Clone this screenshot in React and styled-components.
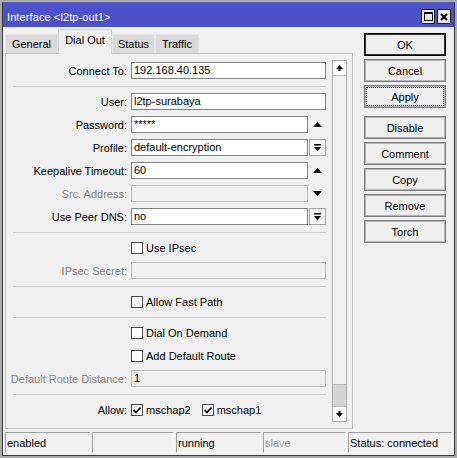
import styled, { createGlobalStyle } from 'styled-components';

const GlobalStyle = createGlobalStyle`
  html, body {
    margin: 0;
    padding: 0;
    background: #ababab;
  }
  body {
    font-family: "Liberation Sans", Arial, sans-serif;
    font-size: 11px;
    color: #000;
  }
  * {
    box-sizing: border-box;
  }
`;

const Frame = styled.div`
  width: 457px;
  height: 458px;
  padding: 2px 0 0 2px;
`;

const Window = styled.div`
  width: 453px;
  height: 454px;
  border: 1px solid #3a3a3a;
  border-top-color: #5a5ec0;
  background: #f0f0f0;
  display: flex;
  flex-direction: column;
`;

const TitleBar = styled.div`
  height: 24px;
  background: #4c50c9;
  color: #fff;
  display: flex;
  align-items: center;
  padding: 4px 3px 0 4px;
`;

const Title = styled.div`
  flex: 1;
  font-size: 11px;
  letter-spacing: 0.1px;
`;

const TitleButtons = styled.div`
  display: flex;
  gap: 2px;
  align-self: flex-end;
  margin-bottom: 3px;
`;

const TitleButton = styled.div`
  width: 14px;
  height: 15px;
  background: #e8e8e8;
  border: 1px solid #1e1e1e;
  display: flex;
  align-items: center;
  justify-content: center;
`;

const Body = styled.div`
  flex: 1;
  display: flex;
  flex-direction: column;
`;

const Main = styled.div`
  display: flex;
  padding-left: 2px;
`;

const LeftCol = styled.div`
  width: 348px;
  margin-top: 2px;
  display: flex;
  flex-direction: column;
`;

const Tabs = styled.div`
  height: 24px;
  display: flex;
  align-items: flex-end;
`;

const Tab = styled.div`
  width: ${(p) => p.$w}px;
  height: ${(p) => (p.$active ? 25 : 19)}px;
  margin-bottom: ${(p) => (p.$active ? -1 : 0)}px;
  padding-bottom: ${(p) => (p.$active ? 5 : 0)}px;
  position: relative;
  z-index: ${(p) => (p.$active ? 2 : 1)};
  background: ${(p) => (p.$active ? '#f0f0f0' : '#dadada')};
  border: 1px solid ${(p) => (p.$active ? '#d0d0d0' : '#e6e6e6')};
  border-bottom: none;
  display: flex;
  align-items: center;
  justify-content: center;
  font-size: 11px;
`;

const Panel = styled.div`
  height: 376px;
  border: 1px solid #c2c2c2;
  background: #f0f0f0;
  display: flex;
`;

const Form = styled.div`
  width: 320px;
  padding-top: 8px;
  display: flex;
  flex-direction: column;
  gap: 6px;
`;

const Row = styled.div`
  height: 17px;
  display: flex;
  align-items: center;
  gap: 4px;
`;

const Label = styled.div`
  width: 121px;
  flex-shrink: 0;
  text-align: right;
  white-space: nowrap;
  color: ${(p) => (p.$disabled ? '#858585' : '#000')};
`;

const Field = styled.div`
  width: 195px;
  height: 17px;
  display: flex;
  align-items: center;
`;

const Input = styled.div`
  flex: 1;
  height: 17px;
  border: 1px solid ${(p) => (p.$disabled ? '#bdbdbd' : '#838383')};
  background: ${(p) => (p.$disabled ? '#f0f0f0' : '#fff')};
  padding-left: 2px;
  line-height: 15px;
  white-space: nowrap;
  overflow: hidden;
`;

const SpinSlot = styled.div`
  width: 18px;
  height: 17px;
  flex-shrink: 0;
  display: flex;
  align-items: center;
  justify-content: center;
`;

const DropButton = styled.div`
  width: 17px;
  height: 17px;
  margin-left: 1px;
  flex-shrink: 0;
  border: 1px solid #a3a3a3;
  background: #f7f7f7;
  display: flex;
  align-items: center;
  justify-content: center;
`;

const Separator = styled.div`
  height: 1px;
  margin: 1px 0 0 7px;
  background: #cdcdcd;
`;

const Check = styled.label`
  display: flex;
  align-items: center;
  gap: 3px;
  margin-right: ${(p) => p.$mr || 0}px;
  white-space: nowrap;
`;

const Box = styled.span`
  width: 12px;
  height: 12px;
  border: 1px solid #4d4d4d;
  background: #fff;
  display: flex;
  align-items: center;
  justify-content: center;
`;

const ScrollBar = styled.div`
  width: 15px;
  height: 362px;
  margin: 6px 0 0 6px;
  border: 1px solid #ababab;
  background: #f0f0f0;
  display: flex;
  flex-direction: column;
`;

const ScrollArrow = styled.div`
  height: 15px;
  background: #fbfbfb;
  border-top: ${(p) => (p.$bottom ? '1px solid #b9b9b9' : 'none')};
  border-bottom: ${(p) => (p.$bottom ? 'none' : '1px solid #b9b9b9')};
  display: flex;
  align-items: center;
  justify-content: center;
`;

const ScrollTrack = styled.div`
  flex: 1;
  border-left: 1px solid #fff;
`;

const ScrollThumb = styled.div`
  height: 22px;
  background: #d4d4d4;
  border-top: 1px solid #b9b9b9;
`;

const Buttons = styled.div`
  width: 82px;
  margin: 6px 0 0 11px;
  display: flex;
  flex-direction: column;
  gap: 3px;
`;

const Button = styled.div`
  height: 23px;
  margin-top: ${(p) => p.$mt || 0}px;
  border: 1px solid ${(p) => (p.$default ? '#000' : '#7c7c7c')};
  box-shadow: inset 0 0 0 1px ${(p) => (p.$default ? '#333' : '#b4b4b4')};
  background: #efefef;
  display: flex;
  align-items: center;
  justify-content: center;
  outline: ${(p) => (p.$focus ? '1px dotted #000' : 'none')};
  outline-offset: -3px;
`;

const StatusBar = styled.div`
  height: 21px;
  margin: 3px 2px 0 2px;
  display: grid;
  grid-template-columns: 85px 82px 85px 83px 1fr;
  gap: 2px;
`;

const StatusCell = styled.div`
  border: 1px solid;
  border-color: #a0a0a0 #fff #fff #a0a0a0;
  padding-left: 1px;
  display: flex;
  align-items: center;
  white-space: nowrap;
  color: ${(p) => (p.$disabled ? '#a3a3a3' : '#000')};
`;

const UpTri = () => (
  <svg width="9" height="5" viewBox="0 0 9 5">
    <polygon points="0,5 4.5,0 9,5" fill="#000" />
  </svg>
);

const DownTri = () => (
  <svg width="9" height="5" viewBox="0 0 9 5">
    <polygon points="0,0 9,0 4.5,5" fill="#000" />
  </svg>
);

const DropIcon = () => (
  <svg width="7" height="8" viewBox="0 0 7 8">
    <rect x="0" y="0" width="7" height="1.5" fill="#000" />
    <polygon points="0,3 7,3 3.5,7.5" fill="#000" />
  </svg>
);

const ArrowIcon = ({ down }) => (
  <svg width="7" height="6" viewBox="0 0 7 6" style={down ? { transform: 'rotate(180deg)' } : undefined}>
    <polygon points="0,4 3.5,0 7,4" fill="#000" />
    <rect x="2.5" y="3.5" width="2" height="2.5" fill="#000" />
  </svg>
);

const MaxIcon = () => (
  <svg width="9" height="9" viewBox="0 0 9 9">
    <rect x="0.5" y="0.5" width="8" height="8" fill="none" stroke="#000" />
    <rect x="0" y="0" width="9" height="2" fill="#000" />
  </svg>
);

const CloseIcon = () => (
  <svg width="8" height="8" viewBox="0 0 8 8">
    <path d="M1 1 L7 7 M7 1 L1 7" stroke="#000" strokeWidth="1.8" />
  </svg>
);

const Tick = () => (
  <svg width="10" height="10" viewBox="0 0 10 10">
    <polyline points="1.5,5 4,7.5 8.5,2.5" fill="none" stroke="#000" strokeWidth="1.8" />
  </svg>
);

function CheckBox({ label, checked, mr }) {
  return (
    <Check $mr={mr}>
      <Box>{checked && <Tick />}</Box>
      {label}
    </Check>
  );
}

function TextRow({ label, value, disabled, spin, drop }) {
  return (
    <Row>
      <Label $disabled={disabled}>{label}</Label>
      <Field>
        <Input $disabled={disabled}>{value}</Input>
        {spin === 'up' && (
          <SpinSlot>
            <UpTri />
          </SpinSlot>
        )}
        {spin === 'down' && (
          <SpinSlot>
            <DownTri />
          </SpinSlot>
        )}
        {drop && (
          <DropButton>
            <DropIcon />
          </DropButton>
        )}
      </Field>
    </Row>
  );
}

const tabs = [
  { name: 'General', w: 53 },
  { name: 'Dial Out', w: 54, active: true },
  { name: 'Status', w: 43 },
  { name: 'Traffic', w: 44 },
];

export default function App() {
  return (
    <Frame>
      <GlobalStyle />
      <Window>
        <TitleBar>
          <Title>Interface &lt;l2tp-out1&gt;</Title>
          <TitleButtons>
            <TitleButton>
              <MaxIcon />
            </TitleButton>
            <TitleButton>
              <CloseIcon />
            </TitleButton>
          </TitleButtons>
        </TitleBar>
        <Body>
          <Main>
            <LeftCol>
              <Tabs>
                {tabs.map((t) => (
                  <Tab key={t.name} $w={t.w} $active={t.active}>
                    {t.name}
                  </Tab>
                ))}
              </Tabs>
              <Panel>
                <Form>
                  <TextRow label="Connect To:" value="192.168.40.135" />
                  <Separator />
                  <TextRow label="User:" value="l2tp-surabaya" />
                  <TextRow label="Password:" value="*****" spin="up" />
                  <TextRow label="Profile:" value="default-encryption" drop />
                  <TextRow label="Keepalive Timeout:" value="60" spin="up" />
                  <TextRow label="Src. Address:" disabled spin="down" />
                  <TextRow label="Use Peer DNS:" value="no" drop />
                  <Separator />
                  <Row>
                    <Label />
                    <CheckBox label="Use IPsec" />
                  </Row>
                  <TextRow label="IPsec Secret:" disabled />
                  <Separator />
                  <Row>
                    <Label />
                    <CheckBox label="Allow Fast Path" />
                  </Row>
                  <Separator />
                  <Row>
                    <Label />
                    <CheckBox label="Dial On Demand" />
                  </Row>
                  <Row>
                    <Label />
                    <CheckBox label="Add Default Route" />
                  </Row>
                  <TextRow label="Default Route Distance:" value="1" disabled />
                  <Separator />
                  <Row>
                    <Label>Allow:</Label>
                    <CheckBox label="mschap2" checked mr={7} />
                    <CheckBox label="mschap1" checked />
                  </Row>
                </Form>
                <ScrollBar>
                  <ScrollArrow>
                    <ArrowIcon />
                  </ScrollArrow>
                  <ScrollTrack />
                  <ScrollThumb />
                  <ScrollArrow $bottom>
                    <ArrowIcon down />
                  </ScrollArrow>
                </ScrollBar>
              </Panel>
            </LeftCol>
            <Buttons>
              <Button $default>OK</Button>
              <Button>Cancel</Button>
              <Button $focus>Apply</Button>
              <Button $mt={5}>Disable</Button>
              <Button>Comment</Button>
              <Button>Copy</Button>
              <Button>Remove</Button>
              <Button>Torch</Button>
            </Buttons>
          </Main>
          <StatusBar>
            <StatusCell>enabled</StatusCell>
            <StatusCell />
            <StatusCell>running</StatusCell>
            <StatusCell $disabled>slave</StatusCell>
            <StatusCell>Status: connected</StatusCell>
          </StatusBar>
        </Body>
      </Window>
    </Frame>
  );
}
